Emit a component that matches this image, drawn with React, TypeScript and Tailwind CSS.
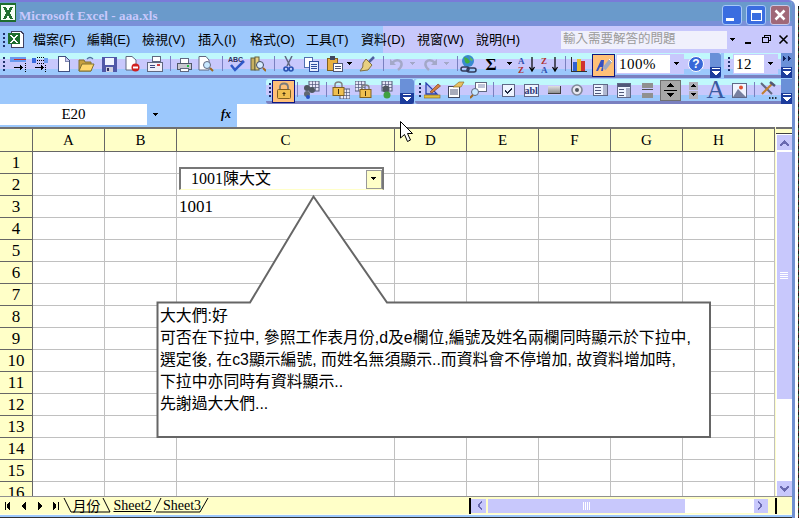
import React from "react";

const BAND = "bg-[linear-gradient(to_bottom,#c0f8fc_0,#c0f8fc_6px,#c8c8fc_6px,#c8c8fc_16px,#9cc8fc_16px,#9cc8fc_22px,#7a80c0_22px)]";
const SERIF = "[font-family:'Liberation_Serif','Noto_Sans_CJK_TC',serif]";
const CJK = "[font-family:'Liberation_Sans','Noto_Sans_CJK_TC',sans-serif]";

const Svg = ({ children, w = 18, h = 18 }: { children: React.ReactNode; w?: number; h?: number }) => (
  <svg width={w} height={h} viewBox={`0 0 ${w} ${h}`} shapeRendering="crispEdges">{children}</svg>
);
const Smooth = ({ children, w = 18, h = 18 }: { children: React.ReactNode; w?: number; h?: number }) => (
  <svg width={w} height={h} viewBox={`0 0 ${w} ${h}`}>{children}</svg>
);

const Grip = () => (
  <div className="flex flex-col gap-[2px] w-[2px]">
    {[0, 1, 2, 3].map((i) => <div key={i} className="w-[2px] h-[2px] bg-[#20306a]" />)}
  </div>
);
const Divider = ({ w }: { w: string }) => (
  <div className={`${w} flex justify-center`}><div className="w-px h-[15px] bg-[#7a80c0] mt-[-2px]" /></div>
);
const Cell = ({ w, children }: { w: string; children?: React.ReactNode }) => (
  <div className={`${w} h-full flex items-center justify-center shrink-0`}>{children}</div>
);
const Arrow = ({ c = "#000" }: { c?: string }) => (
  <Svg w={6} h={4}><path d="M0 0H5V1H4V2H3V3H2V2H1V1H0Z" fill={c} /></Svg>
);
const Chevron = ({ cls, more }: { cls: string; more?: boolean }) => (
  <div className={`${cls} relative bg-[linear-gradient(to_bottom,#6a90d8_0,#6a90d8_55%,#1c3c9c_55%)] flex flex-col items-center justify-end pb-[3px] gap-[2px] shrink-0`}>
    {more && (
      <div className="absolute top-[3px] left-[2px]">
        <Svg w={8} h={5}><path d="M0 0H1V1H2V2H3V3H2V4H1V5H0ZM5 0H6V1H7V2H8V3H7V4H6V5H5Z" fill="#10205a" /></Svg>
      </div>
    )}
    <div className="w-[8px] h-px bg-white" />
    <Svg w={8} h={4}><path d="M0 0H8V1H7V2H6V3H5V4H3V3H2V2H1V1H0Z" fill="#fff" /></Svg>
  </div>
);

const InsRow = () => (
  <Svg w={17} h={17}>
    <rect x="0" y="1" width="16" height="5" fill="#6a9af0" /><rect x="4" y="3" width="12" height="1" fill="#c03030" />
    <path d="M4 11H10V9H11V10H12V11H13V12H12V13H11V14H10V12H4Z" fill="#000" />
    <path d="M15 7h1v1h-1zM15 9h1v1h-1zM15 11h1v1h-1zM15 13h1v1h-1zM15 15h1v1h-1z" fill="#000" />
  </Svg>
);
const InsCol = () => (
  <Svg w={17} h={17}>
    <rect x="0" y="2" width="4" height="5" fill="#3a6ae0" /><rect x="12" y="2" width="4" height="5" fill="#6a9af0" />
    <path d="M5 1h1v1H5zM7 1h1v1H7zM9 1h1v1H9zM11 1h1v1h-1zM5 4h1v1H5zM7 4h1v1H7zM9 4h1v1H9zM11 4h1v1h-1zM5 7h1v1H5zM7 7h1v1H7zM9 7h1v1H9zM11 7h1v1h-1zM13 9h1v1h-1zM13 11h1v1h-1zM13 13h1v1h-1zM13 15h1v1h-1z" fill="#000" />
    <path d="M3 11H9V9H10V10H11V11H12V12H11V13H10V14H9V12H3Z" fill="#000" />
  </Svg>
);
const NewDoc = () => (
  <Svg w={13} h={16}>
    <path d="M1 0.5H8L12 4.5V15.5H1Z" fill="#fff" stroke="#405080" strokeWidth="1" /><path d="M8 1V5H12" fill="#c8c8f0" stroke="#8088b0" />
  </Svg>
);
const Folder = () => (
  <Smooth w={17} h={16}>
    <path d="M1 4H6L7 6H13V15H1Z" fill="#c8a040" stroke="#807030" />
    <path d="M1 15L4 8H16L13 15Z" fill="#ffd870" stroke="#807030" />
    <path d="M9 3Q12 0 15 3" fill="none" stroke="#5070a0" strokeWidth="1.2" />
  </Smooth>
);
const Floppy = () => (
  <Svg w={15} h={15}>
    <rect x="0" y="0" width="15" height="15" fill="#5058a8" /><rect x="3" y="1" width="9" height="7" fill="#f0f4ff" />
    <rect x="4" y="10" width="7" height="5" fill="#d0d0e0" /><rect x="5" y="11" width="2" height="3" fill="#303060" />
  </Svg>
);
const Perm = () => (
  <Smooth w={15} h={16}>
    <path d="M1 0.5H7L11 4V14H1Z" fill="#fff" stroke="#606880" />
    <circle cx="10.5" cy="11.5" r="4" fill="#d02020" /><rect x="8" y="10.5" width="5" height="2" fill="#fff" />
  </Smooth>
);
const Mail = () => (
  <Svg w={16} h={16}>
    <path d="M5 0H13V5H5Z" fill="#fff" stroke="#606880" />
    <rect x="0" y="6" width="15" height="9" fill="#f0f0f8" stroke="#606880" />
    <rect x="3" y="9" width="5" height="1" fill="#404880" /><rect x="3" y="11" width="5" height="1" fill="#404880" />
    <rect x="10" y="8" width="3" height="2" fill="#d04040" />
  </Svg>
);
const Printer = () => (
  <Svg w={16} h={15}>
    <path d="M4 1H12V6H4Z" fill="#fff" stroke="#606880" />
    <path d="M1 6H15V12H1Z" fill="#c8c8d0" stroke="#505868" />
    <rect x="11" y="8" width="2" height="2" fill="#20c040" />
    <rect x="4" y="11" width="8" height="3" fill="#fff" stroke="#606880" />
  </Svg>
);
const Preview = () => (
  <Smooth w={16} h={16}>
    <path d="M1 0.5H8L11 4V14H1Z" fill="#fff" stroke="#606880" />
    <circle cx="9" cy="9" r="3.5" fill="#c8e8ff" stroke="#606880" /><path d="M12 12L15 15" stroke="#a06820" strokeWidth="2" />
  </Smooth>
);
const Spell = () => (
  <Smooth w={17} h={16}>
    <text x="0" y="6" fontSize="7" fontWeight="700" fontFamily="Liberation Sans" fill="#303060">ABC</text>
    <path d="M3 9L7 14L16 5" fill="none" stroke="#3058c8" strokeWidth="2.5" />
  </Smooth>
);
const Research = () => (
  <Smooth w={16} h={16}>
    <rect x="1" y="2" width="4" height="12" fill="#c8b060" stroke="#606040" /><rect x="5" y="1" width="4" height="13" fill="#e8d080" stroke="#606040" />
    <circle cx="10" cy="9" r="3.5" fill="#d8ecff" stroke="#404860" /><path d="M13 12L16 15" stroke="#a06820" strokeWidth="2" />
  </Smooth>
);
const Scissors = () => (
  <Smooth w={11} h={16}>
    <path d="M2 0L7 10M9 0L4 10" stroke="#606880" strokeWidth="1.5" fill="none" />
    <circle cx="3" cy="13" r="2" fill="none" stroke="#2850b0" strokeWidth="1.6" /><circle cx="8" cy="13" r="2" fill="none" stroke="#2850b0" strokeWidth="1.6" />
  </Smooth>
);
const Copy = () => (
  <Svg w={15} h={15}>
    <rect x="0.5" y="0.5" width="8" height="10" fill="#fff" stroke="#5070b0" />
    <rect x="5.5" y="4.5" width="9" height="10" fill="#e8f0ff" stroke="#3050a0" />
    <rect x="7" y="7" width="6" height="1" fill="#3050a0" /><rect x="7" y="9" width="6" height="1" fill="#3050a0" /><rect x="7" y="11" width="6" height="1" fill="#3050a0" />
  </Svg>
);
const Paste = () => (
  <Svg w={16} h={16}>
    <rect x="0.5" y="2.5" width="10" height="12" fill="#e8b040" stroke="#806020" /><rect x="3" y="0" width="5" height="4" fill="#404860" />
    <rect x="6.5" y="7.5" width="9" height="8" fill="#fff" stroke="#505878" /><rect x="8" y="10" width="6" height="1" fill="#505878" /><rect x="8" y="12" width="6" height="1" fill="#505878" />
  </Svg>
);
const Brush = () => (
  <Smooth w={16} h={16}>
    <path d="M10 6L15 1" stroke="#5060a0" strokeWidth="2.5" />
    <path d="M7 3L13 9L9 14L1 15Q5 11 4 7Z" fill="#e8d080" stroke="#807040" />
  </Smooth>
);
const Undo = ({ flip }: { flip?: boolean }) => (
  <Smooth w={15} h={14}>
    <g transform={flip ? "translate(15,0) scale(-1,1)" : undefined}>
      <path d="M3 6Q8 1 12 5Q14 9 9 13" fill="none" stroke="#a4a8c8" strokeWidth="2.5" />
      <path d="M1 2V8H7Z" fill="#a4a8c8" />
    </g>
  </Smooth>
);
const Globe = () => (
  <Smooth w={18} h={19}>
    <circle cx="8" cy="6" r="6" fill="#3a8ad0" /><path d="M4 2Q9 3 10 7Q7 10 5 7Z" fill="#40b040" /><path d="M9 1L13 5L11 6Z" fill="#60c050" />
    <rect x="1" y="12" width="8" height="4" rx="2" fill="none" stroke="#303858" strokeWidth="1.5" /><rect x="7" y="13" width="9" height="4" rx="2" fill="none" stroke="#303858" strokeWidth="1.5" />
  </Smooth>
);
const Sort = ({ top, bot, tc, bc }: { top: string; bot: string; tc: string; bc: string }) => (
  <Smooth w={19} h={17}>
    <text x="0" y="7.5" fontSize="9" fontWeight="700" fontFamily="Liberation Serif" fill={tc}>{top}</text>
    <text x="0" y="16.5" fontSize="9" fontWeight="700" fontFamily="Liberation Serif" fill={bc}>{bot}</text>
    <path d="M14 1V14M11.5 11L14 15L16.5 11" fill="none" stroke="#000" strokeWidth="1.2" />
  </Smooth>
);
const Chart = () => (
  <Svg w={16} h={15}>
    <path d="M0 0V14H16" fill="none" stroke="#303030" strokeWidth="1" />
    <rect x="2" y="5" width="4" height="9" fill="#3060d0" /><rect x="6" y="2" width="4" height="12" fill="#e8c030" /><rect x="10" y="4" width="4" height="10" fill="#d03030" />
  </Svg>
);
const Wizard = () => (
  <Smooth w={19} h={17}>
    <path d="M2 14L7 3H10L9 14H7L8 10H6L4 14Z" fill="#3850c0" />
    <path d="M10 12L17 3" stroke="#a0a8c0" strokeWidth="4" /><path d="M15 2L18 5" stroke="#fff" strokeWidth="1" />
  </Smooth>
);
const Help = () => (
  <div className="w-[16px] h-[16px] rounded-full bg-[#3868d8] border border-white flex items-center justify-center text-white text-[12px] font-bold leading-none [font-family:'Liberation_Sans',sans-serif]">?</div>
);
const Lock = ({ s = 18 }: { s?: number }) => (
  <Smooth w={s} h={s}>
    <path d="M5 8V5Q5 1.500 9 1.500Q13 1.500 13 5V8" fill="none" stroke="#7c7c7c" strokeWidth="1.8" />
    <rect x="2.500" y="7.500" width="13" height="9" rx="1" fill="#f0c050" stroke="#806020" />
    <path d="M9 10V14M7.500 11.500H10.500" stroke="#403010" />
  </Smooth>
);
const MiniGrid = ({ x, y }: { x: number; y: number }) => (
  <g>
    <rect x={x} y={y} width="10" height="10" fill="#e8e8f8" stroke="#505878" />
    <path d={`M${x + 3.5} ${y}V${y + 10}M${x + 6.5} ${y}V${y + 10}M${x} ${y + 3.5}H${x + 10}M${x} ${y + 6.5}H${x + 10}`} stroke="#505878" strokeWidth="0.7" />
  </g>
);
const Share = () => (
  <Smooth w={18} h={18}>
    <MiniGrid x={7} y={0} />
    <circle cx="5" cy="7" r="3" fill="#505860" /><circle cx="10" cy="9" r="3" fill="#505860" /><circle cx="5" cy="13" r="3" fill="#606870" />
    <circle cx="6" cy="16" r="2" fill="#2850c0" />
  </Smooth>
);
const LockGrid = () => (
  <Smooth w={18} h={18}>
    <MiniGrid x={8} y={8} />
    <path d="M3 7V4Q3 1 6.500 1Q10 1 10 4V7" fill="none" stroke="#808080" strokeWidth="1.5" />
    <rect x="1" y="6.500" width="11" height="8" fill="#f0c050" stroke="#806020" /><path d="M6.500 8V13" stroke="#403010" />
  </Smooth>
);
const GridLock = () => (
  <Smooth w={18} h={18}>
    <MiniGrid x={0} y={0} />
    <path d="M7 9V6.500Q7 4 10.500 4Q14 4 14 6.500V9" fill="none" stroke="#808080" strokeWidth="1.5" />
    <rect x="5" y="8.500" width="11" height="8" fill="#f0c050" stroke="#806020" /><path d="M10.500 10V15" stroke="#403010" />
  </Smooth>
);
const GridPerson = () => (
  <Smooth w={18} h={18}>
    <MiniGrid x={3} y={0} />
    <circle cx="7" cy="8" r="3.500" fill="#505860" /><circle cx="8" cy="14" r="3.500" fill="#40a040" />
  </Smooth>
);
const Draw = () => (
  <Smooth w={18} h={17}>
    <path d="M2 1V12H13Z" fill="#b8c0f0" stroke="#2840b0" strokeWidth="1.3" />
    <path d="M6 10L14 2L16.500 4L8 11Z" fill="#d08040" stroke="#803010" strokeWidth="0.6" />
    <rect x="0" y="13" width="16" height="3" fill="#e0c040" stroke="#806020" strokeWidth="0.6" />
  </Smooth>
);
const Props = () => (
  <Smooth w={18} h={18}>
    <rect x="1.500" y="5.500" width="11" height="11" fill="#fff" stroke="#404860" />
    <path d="M3 9H11M3 11H11M3 13H11" stroke="#505878" />
    <path d="M6 6L12 1H17L14 6Z" fill="#e8c060" stroke="#806020" strokeWidth="0.6" />
  </Smooth>
);
const Code = () => (
  <Smooth w={17} h={17}>
    <rect x="5.500" y="0.500" width="11" height="9" fill="#fff" stroke="#606880" />
    <path d="M8 3H15M8 5H15" stroke="#8088b0" />
    <circle cx="5" cy="10" r="3.500" fill="#c8e8ff" stroke="#606880" /><path d="M3 13L0 16" stroke="#a06820" strokeWidth="2" />
  </Smooth>
);
const CheckBox = () => (
  <Svg w={13} h={13}>
    <rect x="0.500" y="0.500" width="12" height="12" fill="#eef4ff" stroke="#606888" />
    <path d="M3 6H4V7H5V8H6V7H7V6H8V5H9V4H10V6H9V7H8V8H7V9H6V10H5V9H4V8H3Z" fill="#202840" />
  </Svg>
);
const Abl = () => (
  <div className="w-[15px] h-[13px] bg-[#eef4ff] border border-[#606888] text-[#303878] text-[10px] font-bold leading-[11px] text-center [font-family:'Liberation_Serif',serif]">abl</div>
);
const Btn = () => <div className="w-[13px] h-[8px] bg-[linear-gradient(to_bottom,#e0e0e0,#909090)] border-r border-b border-[#404040]" />;
const Radio = () => (
  <Smooth w={12} h={12}><circle cx="6" cy="6" r="5" fill="#e8e8f0" stroke="#808898" strokeWidth="1.6" /><circle cx="6" cy="6" r="2" fill="#505860" /></Smooth>
);
const ListB = () => (
  <Svg w={15} h={12}>
    <rect x="0.500" y="0.500" width="14" height="11" fill="#eef4ff" stroke="#606888" />
    <path d="M2 3H8M2 6H8M2 9H8" stroke="#505878" /><rect x="10" y="1" width="4" height="10" fill="#b0b8d0" />
  </Svg>
);
const ComboB = () => (
  <Svg w={14} h={15}>
    <rect x="0.500" y="0.500" width="13" height="14" fill="#eef4ff" stroke="#606888" />
    <rect x="1" y="1" width="12" height="3" fill="#505878" />
    <path d="M2 6H7M2 9H7M2 12H7" stroke="#505878" /><rect x="9" y="5" width="4" height="9" fill="#a8b0c8" />
  </Svg>
);
const Scroll = () => (
  <Svg w={11} h={15}>
    <rect x="0" y="0" width="11" height="5" fill="#909090" /><rect x="0" y="10" width="11" height="5" fill="#909090" />
    <rect x="0" y="6" width="11" height="1" fill="#505050" />
  </Svg>
);
const SpinPressed = () => (
  <div className="w-[21px] h-[21px] bg-[#a8a8a8] border border-[#707070] flex flex-col items-center justify-center gap-[2px]">
    <Svg w={11} h={5}><path d="M5 0H6V1H7V2H8V3H9V4H2V3H3V2H4V1H5Z" fill="#000" /></Svg>
    <div className="w-[13px] h-px bg-black" />
    <Svg w={11} h={5}><path d="M2 0H9V1H8V2H7V3H6V4H5V3H4V2H3V1H2Z" fill="#000" /></Svg>
  </div>
);
const Spin = () => (
  <div className="flex flex-col gap-[1px]">
    <div className="w-[9px] h-[8px] bg-[#b0b0b8] flex items-center justify-center"><Svg w={5} h={3}><path d="M2 0H3V1H4V2H5V3H0V2H1V1H2Z" fill="#000" /></Svg></div>
    <div className="w-[9px] h-[8px] bg-[#b0b0b8] flex items-center justify-center"><Svg w={5} h={3}><path d="M0 0H5V1H4V2H3V3H2V2H1V1H0Z" fill="#000" /></Svg></div>
  </div>
);
const Pic = () => (
  <Smooth w={15} h={15}>
    <rect x="0.500" y="0.500" width="14" height="14" fill="#f0f4ff" stroke="#606888" />
    <circle cx="9" cy="4.500" r="2" fill="#e05030" /><path d="M1 14L6 6L10 10L14 14Z" fill="#7880a0" />
  </Smooth>
);
const Tools = () => (
  <Smooth w={18} h={18}>
    <path d="M2 2L13 13" stroke="#606880" strokeWidth="2" /><path d="M14 2L3 13" stroke="#c08030" strokeWidth="2" />
    <path d="M11 1L16 5" stroke="#505878" strokeWidth="2.500" />
    <path d="M10 17h1.500M13 17h1.500M16 17h1.500" stroke="#000" strokeWidth="1.500" />
  </Smooth>
);
const ExcelLogo = () => (
  <Svg w={17} h={20}>
    <rect x="0" y="0" width="16" height="19" fill="#1e6e2e" />
    <rect x="1" y="2" width="14" height="15" fill="#f4fff4" />
    <path d="M3 4H6L8 8L10 4H13L10 10L13 16H10L8 12L6 16H3L6 10Z" fill="#1e6e2e" />
  </Svg>
);
const MenuDoc = () => (
  <Svg w={16} h={18}>
    <path d="M3.500 0.500H13L15.500 3V16.500H3.500Z" fill="#fff" stroke="#404060" />
    <rect x="0" y="2" width="12" height="11" fill="#1e6e2e" /><path d="M2 4H4L6 7L8 4H10L7 8L10 12H8L6 9L4 12H2L5 8Z" fill="#fff" />
  </Svg>
);

const Combo = ({ w, label, tw }: { w: string; label: string; tw: string }) => (
  <div className={`${w} h-[20px] bg-white border-[1px] border-[#c8c8fc] flex items-center shrink-0`}>
    <span className={`flex-1 ${tw} text-[15px] leading-none text-black ${SERIF} tracking-[0.5px]`}>{label}</span>
    <div className="w-[13px] h-full bg-[#c8c8fc] flex items-center justify-center"><Arrow /></div>
  </div>
);

const MENU = [
  ["檔案(F)", "w-[54px]"], ["編輯(E)", "w-[55px]"], ["檢視(V)", "w-[56px]"], ["插入(I)", "w-[52px]"], ["格式(O)", "w-[56px]"],
  ["工具(T)", "w-[55px]"], ["資料(D)", "w-[56px]"], ["視窗(W)", "w-[59px]"], ["說明(H)", "w-[85px]"],
];
const COLS = ["A", "B", "C", "D", "E", "F", "G", "H", ""];
const ROWS = Array.from({ length: 16 }, (_, i) => i + 1);
const LINES = ["大大們:好", "可否在下拉中, 參照工作表月份,d及e欄位,編號及姓名兩欄同時顯示於下拉中,", "選定後, 在c3顯示編號, 而姓名無須顯示..而資料會不停增加, 故資料增加時,", "下拉中亦同時有資料顯示..", "先謝過大大們..."];

const SheetGrid = () => (
  <div className="relative w-[775px] h-[369px] overflow-hidden shrink-0">
    <div className="grid grid-cols-[33px_72px_72px_218px_72px_72px_72px_72px_72px_20px] grid-rows-[23px] auto-rows-[22px] border-t-2 border-[#707070]">
      <div className="bg-[#ffffc8] border-r border-b border-[#666]" />
      {COLS.map((c, i) => (
        <div key={i} className={`bg-[#ffffc8] border-r border-b border-[#666] flex items-center justify-center text-[15px] text-black ${SERIF}`}>{c}</div>
      ))}
      {ROWS.map((r) => (
        <React.Fragment key={r}>
          <div className={`bg-[#ffffc8] border-r border-b border-[#666] flex items-center justify-center text-[17px] leading-none text-black ${SERIF}`}>{r}</div>
          {COLS.map((c, i) => (
            <div key={i} className={`bg-white border-r border-b border-[#c0c0c0] text-[17px] leading-[21px] pl-[2px] text-black ${SERIF}`}>
              {r === 3 && c === "C" ? "1001" : ""}
            </div>
          ))}
        </React.Fragment>
      ))}
    </div>
    <div className="absolute left-[179px] top-[40px] w-[205px] h-[23px] bg-white border-t-2 border-l-2 border-r-2 border-[#777] border-b border-b-[#ffffc8] flex items-center">
      <span className={`pl-[10px] flex-1 text-[16px] leading-none text-black ${SERIF}`}>1001陳大文</span>
      <div className="w-[16px] h-[19px] bg-[#ffffc8] border border-[#999] flex items-center justify-center"><Arrow /></div>
    </div>
    <svg className="absolute left-0 top-0" width="775" height="369" viewBox="0 0 775 369">
      <path d="M157.500 175.500H250L313.500 69.500L387 175.500H710V310H157.500Z" fill="#fff" stroke="#666" strokeWidth="2" />
    </svg>
    <div className="absolute left-[160px] top-[178px] flex flex-col">
      {LINES.map((l) => (
        <div key={l} className={`h-[22px] text-[15.850px] leading-[22px] whitespace-nowrap text-black ${CJK}`}>{l}</div>
      ))}
    </div>
  </div>
);

const VScroll = () => (
  <div className="w-[17px] h-[369px] bg-white border-l border-[#ffffc8] flex flex-col items-center shrink-0">
    <div className="h-[7px] w-full border-b border-t-2 border-t-[#707070] border-b-[#404040] bg-[#ffffc8]" />
    <div className="w-[15px] h-[15px] mt-[1px] bg-[#c8c8fc] flex items-center justify-center"><Svg w={9} h={6}><path d="M4 0H5V1H6V2H7V3H8V4H9V6H7V5H6V4H3V5H2V6H0V4H1V3H2V2H3V1H4Z" fill="#6a6ab0" /></Svg></div>
    <div className="w-[15px] h-[247px] mt-[2px] bg-[#c8c8fc] flex items-center justify-center">
      <div className="w-[8px] flex flex-col gap-[1px]">
        {[0, 1, 2, 3].map((i) => <div key={i} className="h-px w-full bg-white" />)}
      </div>
    </div>
    <div className="flex-1" />
    <div className="w-[15px] h-[15px] bg-[#c8c8fc] flex items-center justify-center"><Svg w={9} h={6}><path d="M0 0H2V1H3V2H6V1H7V0H9V2H8V3H7V4H6V5H5V6H4V5H3V4H2V3H1V2H0Z" fill="#6a6ab0" /></Svg></div>
  </div>
);

const Tab = ({ w, path, label, cls }: { w: string; path: string; label: string; cls: string }) => (
  <div className={`relative ${w} h-[18px] flex items-center justify-center shrink-0`}>
    <svg className="absolute left-0 top-0 overflow-visible" width="60" height="18"><path d={path} fill="none" stroke="#000" /></svg>
    <span className={`relative text-[14px] leading-none text-black ${cls}`}>{label}</span>
  </div>
);

const Nav = ({ d }: { d: string }) => (
  <div className="w-[16px] flex justify-center shrink-0"><Svg w={6} h={8}><path d={d} fill="#000" /></Svg></div>
);

export default function App() {
  return (
    <div className="relative w-[799px] h-[518px] overflow-hidden bg-white flex">
      <div className="w-[795px] h-full shrink-0 bg-[#9cc8fc] border-r-[3px] border-[#7090d0] rounded-tr-[6px] overflow-hidden flex flex-col">
        <div className="h-[26px] shrink-0 border-t-2 border-[#7a7ad8] bg-[linear-gradient(to_bottom,#6a9acb_0,#6a9acb_19px,#7a90d8_19px)] flex items-start">
          <div className="mt-[1px] ml-0 w-[18px]"><ExcelLogo /></div>
          <span className={`ml-[1px] mt-[7px] text-[13px] leading-none font-bold text-[#c8c8fc] tracking-[0.1px] ${SERIF}`}>Microsoft Excel - aaa.xls</span>
          <div className="flex-1" />
          <div className="flex gap-[4px] mt-[3px] mr-[2px]">
            <div className="w-[20px] h-[20px] rounded-[3px] bg-[#3a6de0] border border-[#a8c8f8] flex items-end pl-[3px] pb-[3px]"><div className="w-[8px] h-[3px] bg-white" /></div>
            <div className="w-[20px] h-[20px] rounded-[3px] bg-[#3a6de0] border border-[#a8c8f8] flex items-center justify-center"><div className="w-[11px] h-[11px] border border-t-[3px] border-white" /></div>
            <div className="w-[20px] h-[20px] rounded-[3px] bg-[#a06878] border border-[#c8c8e8] flex items-center justify-center">
              <Smooth w={12} h={12}><path d="M1.500 1.500L10.500 10.500M10.500 1.500L1.500 10.500" stroke="#fff" strokeWidth="2.500" /></Smooth>
            </div>
          </div>
        </div>

        <div className="h-[27px] shrink-0 bg-[linear-gradient(to_right,#9cc8fc_0,#9cc8fc_383px,#c8c8fc_383px)] flex items-center">
          <div className="w-[8px] h-full flex items-center pl-[3px]"><Grip /></div>
          <div className="w-[25px] shrink-0"><MenuDoc /></div>
          {MENU.map(([t, w]) => (
            <div key={t} className={`${w} shrink-0 text-[13px] leading-none whitespace-nowrap text-black ${CJK}`}>{t}</div>
          ))}
          <div className="w-[177px] h-[18px] bg-[#f0f0fc] flex items-center shrink-0">
            <span className={`pl-[2px] flex-1 text-[12.500px] leading-none text-[#9a9a9a] ${CJK}`}>輸入需要解答的問題</span>
            <div className="w-[11px] h-full bg-[#c8c8fc] flex items-center justify-center"><Arrow /></div>
          </div>
          <div className="flex items-center ml-[6px] gap-[6px]">
            <Svg w={11} h={11}><rect x="1" y="8" width="6" height="2" fill="#000" /></Svg>
            <Svg w={11} h={11}><path d="M3 1H10V7H8V9H1V3H3ZM4 2V3H8V6H9V2ZM2 4V8H7V4Z" fill="#000" /></Svg>
            <Smooth w={11} h={11}><path d="M1.500 1.500L9.500 9.500M9.500 1.500L1.500 9.500" stroke="#000" strokeWidth="1.600" /></Smooth>
          </div>
        </div>

        <div className="h-[25px] shrink-0 flex">
          <div className={`w-[721px] ${BAND} flex items-center shrink-0 pb-[3px] relative`}>
            <Cell w="w-[8px]"><Grip /></Cell>
            <Cell w="w-[20px]"><InsRow /></Cell>
            <Cell w="w-[24px]"><InsCol /></Cell>
            <Cell w="w-[22px]"><NewDoc /></Cell>
            <Cell w="w-[24px]"><Folder /></Cell>
            <Cell w="w-[22px]"><Floppy /></Cell>
            <Cell w="w-[24px]"><Perm /></Cell>
            <Cell w="w-[22px]"><Mail /></Cell>
            <Divider w="w-[8px]" />
            <Cell w="w-[20px]"><Printer /></Cell>
            <Cell w="w-[24px]"><Preview /></Cell>
            <Divider w="w-[8px]" />
            <Cell w="w-[20px]"><Spell /></Cell>
            <Cell w="w-[24px]"><Research /></Cell>
            <Divider w="w-[8px]" />
            <Cell w="w-[20px]"><Scissors /></Cell>
            <Cell w="w-[26px]"><Copy /></Cell>
            <Cell w="w-[22px]"><Paste /></Cell>
            <Cell w="w-[8px]"><Arrow /></Cell>
            <Cell w="w-[26px]"><Brush /></Cell>
            <Divider w="w-[6px]" />
            <Cell w="w-[20px]"><Undo /></Cell>
            <Cell w="w-[14px]"><Arrow c="#a4a8c8" /></Cell>
            <Cell w="w-[20px]"><Undo flip /></Cell>
            <Cell w="w-[14px]"><Arrow c="#a4a8c8" /></Cell>
            <Divider w="w-[6px]" />
            <Cell w="w-[18px]"><Globe /></Cell>
            <Cell w="w-[26px]"><span className="text-[17px] leading-none font-bold text-black [font-family:'Liberation_Serif',serif]">Σ</span></Cell>
            <Cell w="w-[12px]"><Arrow /></Cell>
            <Cell w="w-[22px]"><Sort top="A" bot="Z" tc="#3050b0" bc="#b03030" /></Cell>
            <Cell w="w-[24px]"><Sort top="Z" bot="A" tc="#b03030" bc="#3050b0" /></Cell>
            <Divider w="w-[6px]" />
            <Cell w="w-[21px]"><Chart /></Cell>
            <div className="w-[3px] shrink-0" />
            <div className="w-[23px] h-[23px] mt-[2px] bg-[#ffc078] border border-[#101880] flex items-center justify-center shrink-0"><Wizard /></div>
            <div className="w-px shrink-0" />
            <Combo w="w-[68px]" label="100%" tw="pl-[2px]" />
            <Cell w="w-[24px]"><Help /></Cell>
            <div className="absolute right-0 bottom-0 h-[25px]"><Chevron cls="w-[11px] h-full rounded-r-[3px]" /></div>
          </div>
          <div className="w-[3px] shrink-0" />
          <div className={`w-[57px] ${BAND} flex items-center pb-[3px] shrink-0`}>
            <Cell w="w-[9px]"><Grip /></Cell>
            <Combo w="w-[45px]" label="12" tw="pl-[2px]" />
          </div>
          <Chevron cls="w-[11px] h-full" more />
        </div>

        <div className="h-[26px] shrink-0 flex pt-[1px]">
          <div className="w-[266px] shrink-0" />
          <div className={`w-[148px] h-[25px] ${BAND} rounded-l-[3px] flex items-center pb-[3px] relative shrink-0`}>
            <Cell w="w-[6px]"><div className="ml-[2px]"><Grip /></div></Cell>
            <div className="w-[23px] h-[23px] mt-[2px] bg-[#ffc078] border border-[#101880] flex items-center justify-center shrink-0"><Lock /></div>
            <Divider w="w-[5px]" />
            <Cell w="w-[22px]"><Share /></Cell>
            <Divider w="w-[8px]" />
            <Cell w="w-[22px]"><LockGrid /></Cell>
            <Cell w="w-[24px]"><GridLock /></Cell>
            <Cell w="w-[24px]"><GridPerson /></Cell>
            <div className="absolute right-0 bottom-0 h-[25px]"><Chevron cls="w-[14px] h-full rounded-r-[3px]" /></div>
          </div>
          <div className="w-px shrink-0" />
          <div className={`w-[377px] h-[25px] ${BAND} rounded-l-[3px] flex items-center pb-[3px] relative shrink-0`}>
            <Cell w="w-[7px]"><div className="ml-[2px]"><Grip /></div></Cell>
            <Cell w="w-[22px]"><Draw /></Cell>
            <Cell w="w-[23px]"><Props /></Cell>
            <Cell w="w-[22px]"><Code /></Cell>
            <Divider w="w-[8px]" />
            <Cell w="w-[22px]"><CheckBox /></Cell>
            <Cell w="w-[24px]"><Abl /></Cell>
            <Cell w="w-[22px]"><Btn /></Cell>
            <Cell w="w-[24px]"><Radio /></Cell>
            <Cell w="w-[23px]"><ListB /></Cell>
            <Cell w="w-[24px]"><ComboB /></Cell>
            <Cell w="w-[22px]"><Scroll /></Cell>
            <Cell w="w-[24px]"><SpinPressed /></Cell>
            <Cell w="w-[22px]"><Spin /></Cell>
            <Cell w="w-[24px]"><span className="text-[26px] leading-none text-[#3a5aa0] [font-family:'Liberation_Serif',serif]">A</span></Cell>
            <Cell w="w-[22px]"><Pic /></Cell>
            <Divider w="w-[8px]" />
            <Cell w="w-[20px]"><Tools /></Cell>
            <div className="absolute right-0 bottom-0 h-[25px]"><Chevron cls="w-[11px] h-full" /></div>
          </div>
        </div>

        <div className="h-[23px] shrink-0 flex">
          <div className={`w-[147px] h-[21px] bg-white flex items-center justify-center text-[15px] leading-none text-black ${SERIF}`}>E20</div>
          <div className="w-[18px] flex items-center justify-center pb-[2px]"><Arrow /></div>
          <div className="w-[72px] flex items-center justify-center pl-[50px] pb-[3px] text-[12px] leading-none italic font-bold text-black [font-family:'Liberation_Serif',serif]">fx</div>
          <div className="flex-1 h-full bg-white" />
        </div>

        <div className="flex h-[369px] shrink-0">
          <SheetGrid />
          <VScroll />
        </div>

        <div className="h-[18px] shrink-0 bg-[#ffffc8] flex items-center border-t border-[#909090]">
          <Nav d="M0 0H1V8H0ZM5 0V8H4V7H3V6H2V2H3V1H4V0Z" />
          <Nav d="M5 0V8H4V7H3V6H2V5H1V3H2V2H3V1H4V0Z" />
          <Nav d="M1 0V8H2V7H3V6H4V5H5V3H4V2H3V1H2V0Z" />
          <Nav d="M5 0H6V8H5ZM0 0V8H1V7H2V6H3V2H2V1H1V0Z" />
          <Tab w="w-[45px]" path="M0 1L7 15H46M39 1L46 15" label="月份" cls={CJK} />
          <Tab w="w-[47px]" path="M45 15L52 1" label="Sheet2" cls={`underline ${SERIF}`} />
          <Tab w="w-[52px]" path="M0 15H44L52 1" label="Sheet3" cls={SERIF} />
          <div className="w-[261px] shrink-0" />
          <div className="w-[2px] h-[16px] bg-black shrink-0" />
          <div className="w-[15px] h-[14px] bg-[#c8c8fc] flex items-center justify-center shrink-0"><Svg w={6} h={9}><path d="M5 0H6V2H5V3H4V6H5V7H6V9H5V8H4V7H3V6H2V3H3V2H4V1H5Z" fill="#6a6ab0" /></Svg></div>
          <div className="w-[197px] h-[14px] ml-[2px] bg-[#c8c8fc] flex items-center justify-center shrink-0">
            <div className="flex gap-[1px] h-[8px]">{[0, 1, 2, 3].map((i) => <div key={i} className="w-px h-full bg-white" />)}</div>
          </div>
          <div className="w-[69px] h-[14px] bg-white shrink-0" />
          <div className="w-[14px] h-[14px] bg-[#c8c8fc] flex items-center justify-center shrink-0"><Svg w={6} h={9}><path d="M0 0H1V1H2V2H3V3H4V6H3V7H2V8H1V9H0V7H1V6H2V3H1V2H0Z" fill="#6a6ab0" /></Svg></div>
          <div className="w-[7px] shrink-0" />
          <div className="w-[2px] h-[16px] bg-black shrink-0" />
        </div>

        <div className="flex-1 flex flex-col">
          <div className="h-px bg-[#ffffe0]" />
          <div className="h-[2px] bg-[#9cc8fc]" />
          <div className="h-px bg-[#303030]" />
        </div>
      </div>

      <div className="flex-1 flex justify-end pt-[6px]">
        <div className="w-px h-full bg-[repeating-linear-gradient(to_bottom,#1a1a1a_0,#1a1a1a_3px,#2a6a3a_3px,#2a6a3a_5px,#6a2a2a_5px,#6a2a2a_7px)]" />
      </div>

      <svg className="absolute left-[400px] top-[121px]" width="15" height="23" viewBox="0 0 15 23">
        <path d="M0.500 0.500V17L4.500 13.500L7.500 20.500L10.500 19L7.500 12.500H12.500Z" fill="#fff" stroke="#000" />
      </svg>
    </div>
  );
}
